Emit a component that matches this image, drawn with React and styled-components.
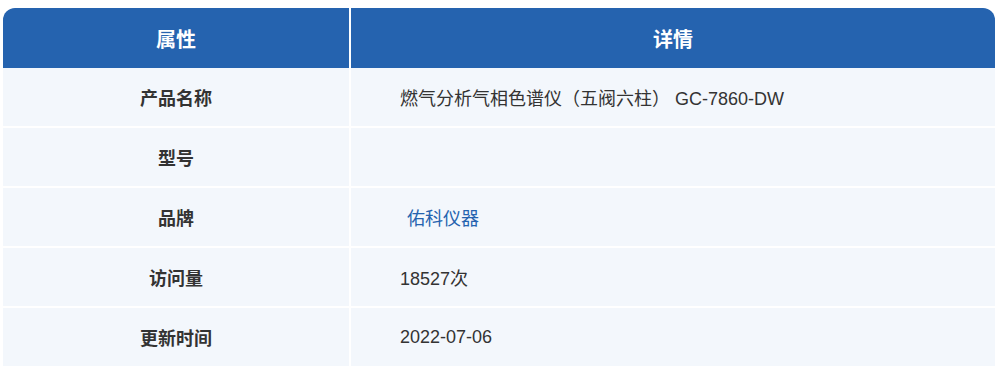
import React from "react";
import styled, { createGlobalStyle } from "styled-components";

const Global = createGlobalStyle`
  html, body { margin: 0; padding: 0; background: #ffffff; }
  body { font-family: "Liberation Sans", "Noto Sans CJK SC", sans-serif; }
`;

const Table = styled.div`
  margin: 8px 0 0 3px;
  width: 992px;
  display: flex;
  flex-direction: column;
  border-radius: 12px 12px 0 0;
  overflow: hidden;
`;

const Row = styled.div`
  display: grid;
  grid-template-columns: 346px 644px;
  column-gap: 2px;
  height: ${(p) => (p.$head ? 60 : 58)}px;
  margin-top: ${(p) => (p.$gap ? 2 : 0)}px;
  background: #ffffff;
`;

const HeadCell = styled.div`
  background: #2563af;
  color: #ffffff;
  font-size: 20px;
  font-weight: 700;
  display: flex;
  align-items: center;
  justify-content: center;
`;

const LabelCell = styled.div`
  background: #f3f7fc;
  color: #333333;
  font-size: 18px;
  font-weight: 700;
  display: flex;
  align-items: center;
  justify-content: center;
`;

const ValueCell = styled.div`
  background: #f3f7fc;
  color: #333333;
  font-size: 18px;
  display: flex;
  align-items: center;
  padding-left: 49px;
`;

const Link = styled.a`
  color: #2563af;
  text-decoration: none;
  margin-left: 7px;
`;

const rows = [
  ["产品名称", "燃气分析气相色谱仪（五阀六柱） GC-7860-DW"],
  ["型号", ""],
  ["品牌", <Link href="#">佑科仪器</Link>],
  ["访问量", "18527次"],
  ["更新时间", "2022-07-06"],
];

export default function App() {
  return (
    <>
      <Global />
      <Table>
        <Row $head>
          <HeadCell>属性</HeadCell>
          <HeadCell>详情</HeadCell>
        </Row>
        {rows.map(([k, v], i) => (
          <Row key={k} $gap={i > 0}>
            <LabelCell>{k}</LabelCell>
            <ValueCell>{v}</ValueCell>
          </Row>
        ))}
      </Table>
    </>
  );
}
